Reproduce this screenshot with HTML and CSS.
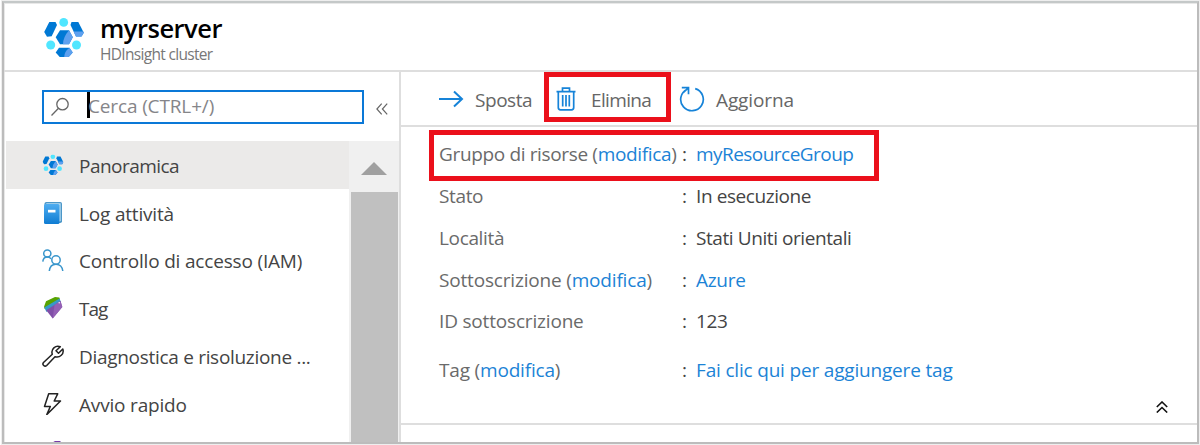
FILE: index.html
```
<!DOCTYPE html>
<html lang="it">
<head>
<meta charset="utf-8">
<title>myrserver</title>
<link rel="stylesheet" href="styles.css">
</head>
<body>
<svg class="defs" width="0" height="0">
  <symbol id="cluster" viewBox="0 0 40 40">
    <path fill="#0078d4" d="M5.300 4h6.200l1.500 3-5.300 11.200-4.700.6L.2 14z"/>
    <path fill="#0078d4" d="M27.500 4h6.800l5.500 10.700-2.300 3.800H32L26.500 7z"/>
    <path fill="#5ea0ef" d="M39.200 13.500l.6 1.200-2.300 3.800H32l-2.500-5z"/>
    <path fill="#0078d4" d="M16 12.200h9l3.800 7-3.800 7h-9l-4.300-7z"/>
    <path fill="#5ea0ef" d="M25 12.200l3.800 7-3.800 7h-6q0-7 6-14z"/>
    <path fill="#0078d4" d="M15 29.700h10.500l3.200 4.800-4 4.500h-9l-4-4.500z"/>
    <path fill="#5ea0ef" d="M25.500 29.700l3.200 4.800-4 4.500h-4.500q0-5.500 5.300-9.300z"/>
    <circle cx="19.700" cy="4.400" r="4.400" fill="#50e6ff"/>
    <circle cx="6.700" cy="27" r="4.500" fill="#50e6ff"/>
    <circle cx="32.500" cy="27" r="4.500" fill="#50e6ff"/>
  </symbol>
</svg>
<div class="window">
  <header class="header">
    <svg class="logo"><use href="#cluster"/></svg>
    <div>
      <h1 class="title">myrserver</h1>
      <div class="subtitle">HDInsight cluster</div>
    </div>
  </header>
  <div class="body">
    <aside class="side">
      <div class="search-row">
        <div class="search">
          <svg class="lens" viewBox="0 0 20 20"><circle cx="12.500" cy="7.200" r="5.700"/><path d="M8.500 11.300L1.500 18.500"/></svg>
          <span class="caret"></span><span class="placeholder">Cerca (CTRL+/)</span>
        </div>
        <svg class="collapse" viewBox="0 0 12 12"><path d="M5.700.7L.9 6l4.800 5.300M11.200.7L6.400 6l4.800 5.300"/></svg>
      </div>
      <div class="menu-area">
        <nav class="menu">
          <div class="item active"><svg class="ico" viewBox="0 0 22 22"><use href="#cluster" width="21" height="21" x=".5" y=".5"/></svg><span class="tight">Panoramica</span></div>
          <div class="item"><svg class="ico" viewBox="0 0 22 22">
            <defs><linearGradient id="book" x2="0" y2="1"><stop stop-color="#4fadf0"/><stop offset="1" stop-color="#0f7cd2"/></linearGradient></defs>
            <rect x="2.500" y="0" width="17.500" height="21" rx="1.800" fill="#4c97c8"/><path d="M4 1.300h14.700V19L16 20z" fill="#b9dcf2"/><rect x="2" y="2" width="15.500" height="20" rx="1.500" fill="url(#book)"/><path fill="#fff" d="M6 7.800h7.500v2.700H6z"/></svg><span class="wide">Log attività</span></div>
          <div class="item"><svg class="ico line-blue" viewBox="0 0 22 22"><circle cx="5.300" cy="4.500" r="3.600"/><path d="M.8 12.700c.3-2.900 2-4.600 4.500-4.600 1.600 0 2.900.6 3.600 1.700"/><circle cx="14" cy="11" r="4.200"/><path d="M7.300 22c.4-4 3-6.800 6.700-6.800s6.400 2.800 6.800 6.800"/></svg><span class="wide">Controllo di accesso (IAM)</span></div>
          <div class="item"><svg class="ico" viewBox="0 0 22 22"><path fill="#57a300" d="M2 9.700l2-5.400L13 0l4.300.5.700 2-15.300 9.500z"/><path fill="#3799c8" d="M2.300 10.500L17.500 1.500 19 5 4.500 15z"/><path fill="#804fa8" d="M4.200 13.300L18.500 4l1.800 6-9.600 11.500z"/><path fill="#9460b5" d="M12.500 8l6-4 1.800 6-9.600 11.500z"/><circle cx="17.200" cy="5.800" r=".7" fill="#fff"/></svg><span class="tag">Tag</span></div>
          <div class="item"><svg class="ico line-dark" viewBox="0 0 22 22"><path d="M18.300 1.700a6 6 0 0 0-8 7.500L1.500 17.500c-1.800 2.200 1.200 4.700 3.200 3l8.300-8.800c4.700 1.500 9.500-2.700 7.800-7.700l-4.300 4.200-2.500-2.400z"/></svg><span>Diagnostica e risoluzione ...</span></div>
          <div class="item"><svg class="ico line-dark" viewBox="0 0 22 22"><path d="M6.700.8h9L12.200 8h6.300L4.800 21.600 8.300 13.500H2.500z"/></svg><span class="wide">Avvio rapido</span></div>
          <div class="item"><svg class="ico" viewBox="0 0 22 22"><path fill="#773aa8" d="M13 0h5l4 4-4 9H8V3z"/></svg></div>
        </nav>
        <div class="scroll"><svg class="up" viewBox="0 0 26 13"><path d="M13 0l13 13H0z"/></svg><div class="thumb"></div></div>
      </div>
    </aside>
    <main class="main">
      <div class="toolbar">
        <svg class="arrow" viewBox="0 0 26 18"><path d="M1 9h23M16 1.500L24 9l-8 7.500"/></svg>
        <span class="sposta">Sposta</span>
        <span class="mark delete"><svg class="trash" viewBox="0 0 20 24"><path d="M.5 4.700h19M6.500 4V1.200h7V4M2.300 5v15.500q0 2.300 2.200 2.300h11q2.200 0 2.200-2.300V5M6.700 8v11.500M10 8v11.500M13.300 8v11.500"/></svg>
        <span class="elimina">Elimina</span></span>
        <svg class="refresh" viewBox="0 0 26 26"><path d="M16.200 2.600A11.300 11.300 0 1 1 8.200 3.200M2.800 1.700h6.700V8.200M9 2.200L4.500 6.500"/></svg>
        <span class="aggiorna">Aggiorna</span>
      </div>
      <div class="details">
        <div class="mark group"></div>
        <div class="row"><span class="key">Gruppo di risorse (<a>modifica</a>)</span><i>:</i><a class="tight">myResourceGroup</a></div>
        <div class="row"><span class="key">Stato</span><i>:</i><span class="value">In esecuzione</span></div>
        <div class="row"><span class="key">Località</span><i>:</i><span class="value">Stati Uniti orientali</span></div>
        <div class="row short"><span class="key wide">Sottoscrizione (<a>modifica</a>)</span><i>:</i><a>Azure</a></div>
        <div class="row tall"><span class="key wide">ID sottoscrizione</span><i>:</i><span class="value">123</span></div>
        <div class="row"><span class="key wide">Tag (<a>modifica</a>)</span><i>:</i><a class="wide">Fai clic qui per aggiungere tag</a></div>
        <svg class="fold" viewBox="0 0 12 12"><path d="M.8 6L6 1l5.200 5M.8 11.500L6 6.500l5.200 5"/></svg>
      </div>
    </main>
  </div>
</div>
</body>
</html>
```
FILE: styles.css
```
* { box-sizing: border-box; }
body { margin: 0; width: 1200px; height: 445px; overflow: hidden; background: #fff; padding: 1px 1px 1px 2px; font-family: "Open Sans", "Noto Sans", sans-serif; font-size: 19px; letter-spacing: -.3px; color: #444; }
svg { display: block; flex: none; fill: none; }
.defs { position: absolute; }
.window { width: 1197px; height: 443px; border: 2px solid #bcbcbc; border-top-color: #c4c8c8; display: flex; flex-direction: column; overflow: hidden; box-shadow: inset 1px 1px #e8e8e8, 0 0 0 1px #eee; }
.header { height: 69px; flex: none; border-bottom: 2px solid #dedede; padding-left: 40px; display: flex; }
.logo { width: 40px; height: 40px; margin: 15px 16px 0 0; }
.title { margin: 8px 0 0; font-size: 25.5px; line-height: 34px; font-weight: 600; color: #000; letter-spacing: -.5px; }
.subtitle { font-size: 15.5px; line-height: 18px; color: #777; letter-spacing: -.68px; }
.body { display: flex; flex: 1; min-height: 0; }
.side { width: 395.5px; display: flex; flex-direction: column; }
.search-row { height: 69px; flex: none; display: flex; padding: 18px 0 0 38px; }
.search { width: 322px; height: 34px; border: 2px solid #0a78d7; display: flex; padding-left: 6px; }
.lens { width: 20px; height: 20px; margin-top: 5px; stroke: #666; stroke-width: 1.3; }
.caret { width: 3px; height: 26px; background: #000; margin-left: 17px; margin-right: -2px; }
.placeholder { color: #858589; line-height: 29px; letter-spacing: -.14px; }
.collapse { width: 12px; height: 12px; margin: 13px 0 0 12px; stroke: #666; stroke-width: 1.2; }
.menu-area { display: flex; flex: 1; min-height: 0; overflow: hidden; }
.menu { width: 345px; padding-left: 2px; flex: none; }
.item { height: 47.8px; display: flex; align-items: center; padding: 2px 0 0 36px; color: #444; }
.item.active { background: #ebeae9; }
.ico { width: 22px; height: 22px; margin: -2px 15px 0 0; }
.line-blue { stroke: #3a96cc; stroke-width: 1.5; }
.line-dark { stroke: #222; stroke-width: 1.5; stroke-linejoin: round; }
.scroll { width: 50px; background: #f0f0f0; display: flex; flex-direction: column; align-items: center; }
.up { width: 26px; height: 13px; margin-top: 21px; fill: #a0a0a0; }
.thumb { width: 47px; flex: 1; margin-top: 17px; background: #c0c0c0; }
.main { flex: 1; border-left: 2px solid #dedede; min-width: 0; margin-left: -.5px; }
.toolbar { height: 55px; border-bottom: 2px solid #dedede; display: flex; padding-left: 37px; color: #666; line-height: 56px; }
.arrow { width: 26px; height: 18px; margin-top: 18px; stroke: #1683d8; stroke-width: 2; }
.sposta { width: 69px; margin-left: 11px; flex: none; letter-spacing: -.45px; }
.mark { border: 5px solid #eb101b; }
.delete { width: 127px; height: 50px; display: flex; padding-left: 7px; line-height: 46px; flex: none; }
.trash { width: 20px; height: 24px; margin-top: 10px; stroke: #1683d8; stroke-width: 1.7; }
.elimina { margin-left: 15px; letter-spacing: -.65px; }
.refresh { width: 26px; height: 26px; margin: 14px 0 0 8px; stroke: #1683d8; stroke-width: 1.7; }
.aggiorna { margin-left: 11px; letter-spacing: -.12px; }
.details { height: 298px; border-bottom: 2px solid #dedede; padding: 6px 0 0 38px; position: relative; color: #444; }
.group { position: absolute; left: 28px; top: 3px; width: 450px; height: 51px; }
.row { height: 42px; display: flex; line-height: 42px; white-space: nowrap; }
.row.short { height: 41px; }
.row.tall { height: 49px; }
.key { width: 243px; color: #6a6a6a; flex: none; letter-spacing: -.35px; }
.row i { width: 14px; font-style: normal; }
.wide, .key.wide { letter-spacing: -.18px; }
.tight { letter-spacing: -.54px; }
.value { letter-spacing: -.42px; }
.tag { letter-spacing: -1px; }
a { color: #1c83d6; }
.fold { position: absolute; right: 29px; bottom: 10px; width: 12px; height: 12px; stroke: #111; stroke-width: 1.6; }
```
